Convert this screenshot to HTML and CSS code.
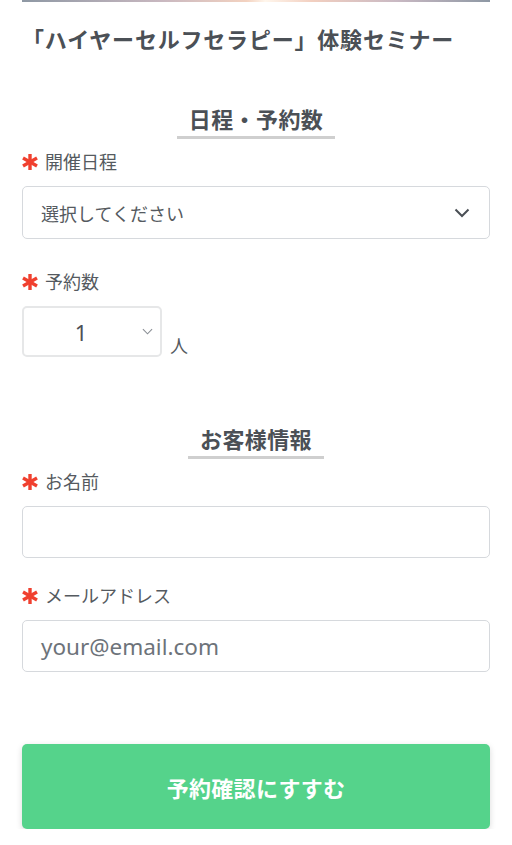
FILE: index.html
```html
<!DOCTYPE html>
<html lang="ja">
<head>
<meta charset="utf-8">
<title>体験セミナー予約</title>
<link rel="stylesheet" href="styles.css">
</head>
<body>
<div class="page">
  <div class="topline"></div>
  <h1 class="title">「ハイヤーセルフセラピー」体験セミナー</h1>

  <div class="section">
    <h2 class="section-heading"><span>日程・予約数</span></h2>

    <div class="field">
      <div class="label"><svg class="req" viewBox="0 0 16 16"><g stroke="#f0402f" stroke-width="3.4"><line x1="8" y1="0" x2="8" y2="16"/><line x1="1" y1="4" x2="15" y2="12"/><line x1="1" y1="12" x2="15" y2="4"/></g></svg>開催日程</div>
      <div class="select">
        <span class="select-text">選択してください</span>
        <svg class="chev" viewBox="0 0 16 10"><polyline points="1.5,1.5 8,8 14.5,1.5" fill="none" stroke="#4a4f55" stroke-width="2"/></svg>
      </div>
    </div>

    <div class="field field-count">
      <div class="label"><svg class="req" viewBox="0 0 16 16"><g stroke="#f0402f" stroke-width="3.4"><line x1="8" y1="0" x2="8" y2="16"/><line x1="1" y1="4" x2="15" y2="12"/><line x1="1" y1="12" x2="15" y2="4"/></g></svg>予約数</div>
      <div class="count-row">
        <div class="count-select">
          <span class="count-num">1</span>
          <svg class="chev-small" viewBox="0 0 12 7"><polyline points="1,1 6,6 11,1" fill="none" stroke="#8a8f95" stroke-width="1.2"/></svg>
        </div>
        <span class="unit">人</span>
      </div>
    </div>
  </div>

  <div class="section section-2">
    <h2 class="section-heading"><span>お客様情報</span></h2>

    <div class="field">
      <div class="label"><svg class="req" viewBox="0 0 16 16"><g stroke="#f0402f" stroke-width="3.4"><line x1="8" y1="0" x2="8" y2="16"/><line x1="1" y1="4" x2="15" y2="12"/><line x1="1" y1="12" x2="15" y2="4"/></g></svg>お名前</div>
      <div class="input"></div>
    </div>

    <div class="field field-mail">
      <div class="label"><svg class="req" viewBox="0 0 16 16"><g stroke="#f0402f" stroke-width="3.4"><line x1="8" y1="0" x2="8" y2="16"/><line x1="1" y1="4" x2="15" y2="12"/><line x1="1" y1="12" x2="15" y2="4"/></g></svg>メールアドレス</div>
      <div class="input"><span class="placeholder">your@email.com</span></div>
    </div>
  </div>

  <button class="submit">予約確認にすすむ</button>
</div>
</body>
</html>
```

FILE: styles.css
```css
* { box-sizing: border-box; }
html, body { margin: 0; padding: 0; background: #fff; }
body {
  font-family: "Noto Sans", "Noto Sans CJK JP", sans-serif;
  color: #4b5056;
}
.page {
  width: 512px;
  padding: 0 22px;
}
.topline {
  height: 2px;
  background: linear-gradient(90deg, #8e98a4 0%, #c9b8c0 30%, #f3d2c0 48%, #fff6ec 52%, #f2cfc0 62%, #c9b9c3 80%, #8e98a4 100%);
}
.title {
  margin: 21px 0 0;
  font-size: 22px;
  line-height: 32px;
  font-weight: 700;
  color: #4b5056;
  letter-spacing: 0.8px;
}
.section { margin-top: 49px; }
.section-2 { margin-top: 67px; }
.section-heading {
  margin: 0;
  text-align: center;
  font-size: 22px;
  line-height: 30px;
  font-weight: 700;
  color: #4b5056;
  letter-spacing: 0.4px;
}
.section-heading span {
  display: inline-block;
  padding: 0 12px 2px;
  border-bottom: 3px solid #cfcfcf;
}
.field { margin-top: 10px; }
.field-count { margin-top: 30px; }
.field-mail { margin-top: 25px; }
.label {
  display: flex;
  align-items: center;
  font-size: 18px;
  line-height: 26px;
  color: #555a60;
}
.req {
  width: 16px;
  height: 16px;
  margin-right: 7px;
  flex: none;
}
.select {
  margin-top: 11px;
  height: 53px;
  border: 1px solid #d6d9dd;
  border-radius: 5px;
  display: flex;
  align-items: center;
  justify-content: space-between;
  padding: 0 19px 0 18px;
}
.select-text {
  font-size: 18px;
  color: #555a60;
}
.chev { width: 16px; height: 10px; }
.count-row {
  margin-top: 11px;
  display: flex;
  align-items: flex-end;
  gap: 8px;
}
.count-select {
  width: 140px;
  height: 51px;
  border: 2px solid #e6e7e8;
  border-radius: 5px;
  position: relative;
  display: flex;
  align-items: center;
  justify-content: center;
  padding-right: 22px;
}
.count-num {
  font-size: 22px;
  color: #4b5056;
}
.chev-small {
  position: absolute;
  right: 7px;
  top: 20px;
  width: 11px;
  height: 7px;
}
.unit {
  font-size: 18px;
  line-height: 22px;
  color: #555a60;
}
.input {
  margin-top: 11px;
  height: 52px;
  border: 1px solid #d6d9dd;
  border-radius: 5px;
  display: flex;
  align-items: center;
  padding: 0 18px;
}
.placeholder {
  font-size: 22.5px;
  color: #6d737a;
}
.submit {
  display: block;
  width: 100%;
  margin-top: 72px;
  height: 85px;
  border: none;
  border-radius: 5px;
  background: #55d38b;
  color: #fff;
  font-family: "Noto Sans CJK JP", "Noto Sans", sans-serif;
  font-size: 22px;
  font-weight: 700;
  letter-spacing: 0.3px;
  box-shadow: 0 2px 6px rgba(0, 0, 0, 0.15);
}
```
